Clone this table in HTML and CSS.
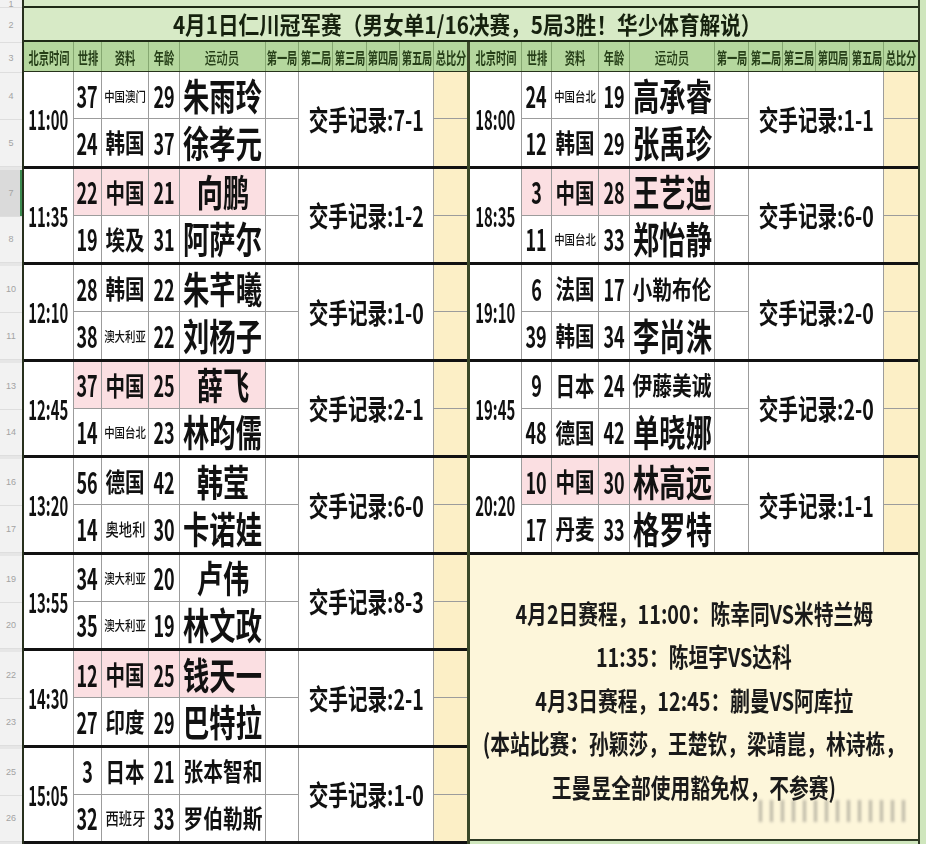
FILE: index.html
```html
<!DOCTYPE html>
<html lang="zh">
<head>
<meta charset="utf-8">
<title>4月1日仁川冠军赛</title>
<link rel="stylesheet" href="styles.css">
</head>
<body>
<div class="gutter">
  <div class="r r1">1</div>
  <div class="r r2">2</div>
  <div class="r r3">3</div>
  <div class="r ra">4</div><div class="r rb">5</div><div class="r rs"></div>
  <div class="r ra sel">7</div><div class="r rb">8</div><div class="r rs"></div>
  <div class="r ra">10</div><div class="r rb">11</div><div class="r rs"></div>
  <div class="r ra">13</div><div class="r rb">14</div><div class="r rs"></div>
  <div class="r ra">16</div><div class="r rb">17</div><div class="r rs"></div>
  <div class="r ra">19</div><div class="r rb">20</div><div class="r rs"></div>
  <div class="r ra">22</div><div class="r rb">23</div><div class="r rs"></div>
  <div class="r ra">25</div><div class="r rb">26</div><div class="r rs"></div>
</div>
<div class="sheet">
  <div class="main">
    <div class="top"></div>
    <div class="title"><span class="t">4月1日仁川冠军赛（男女单1/16决赛，5局3胜！华少体育解说）</span></div>
    <div class="halves">
      <div class="half left">
        <div class="hdr">
          <div class="h"><span class="t">北京时间</span></div><div class="h"><span class="t">世排</span></div><div class="h"><span class="t">资料</span></div><div class="h"><span class="t">年龄</span></div><div class="h light"><span class="t">运动员</span></div><div class="h"><span class="t">第一局</span></div><div class="h"><span class="t">第二局</span></div><div class="h"><span class="t">第三局</span></div><div class="h"><span class="t">第四局</span></div><div class="h"><span class="t">第五局</span></div><div class="h"><span class="t">总比分</span></div>
        </div>

        <div class="match">
          <div class="c time"><span class="t">11:00</span></div>
          <div class="c num r1c"><span class="t">37</span></div><div class="c cty s4 r1c"><span class="t">中国澳门</span></div><div class="c num r1c"><span class="t">29</span></div><div class="c name r1c"><span class="t">朱雨玲</span></div><div class="c g r1c"></div>
          <div class="c num r2c"><span class="t">24</span></div><div class="c cty r2c"><span class="t">韩国</span></div><div class="c num r2c"><span class="t">37</span></div><div class="c name r2c"><span class="t">徐孝元</span></div><div class="c g r2c"></div>
          <div class="c rec"><span class="t">交手记录:7-1</span></div>
          <div class="c tot r1c"></div><div class="c tot r2c"></div>
        </div>

        <div class="match">
          <div class="c time"><span class="t">11:35</span></div>
          <div class="c num r1c pk"><span class="t">22</span></div><div class="c cty r1c pk"><span class="t">中国</span></div><div class="c num r1c pk"><span class="t">21</span></div><div class="c name r1c pk"><span class="t">向鹏</span></div><div class="c g r1c"></div>
          <div class="c num r2c"><span class="t">19</span></div><div class="c cty r2c"><span class="t">埃及</span></div><div class="c num r2c"><span class="t">31</span></div><div class="c name r2c"><span class="t">阿萨尔</span></div><div class="c g r2c"></div>
          <div class="c rec"><span class="t">交手记录:1-2</span></div>
          <div class="c tot r1c"></div><div class="c tot r2c"></div>
        </div>

        <div class="match">
          <div class="c time"><span class="t">12:10</span></div>
          <div class="c num r1c"><span class="t">28</span></div><div class="c cty r1c"><span class="t">韩国</span></div><div class="c num r1c"><span class="t">22</span></div><div class="c name r1c"><span class="t">朱芊曦</span></div><div class="c g r1c"></div>
          <div class="c num r2c"><span class="t">38</span></div><div class="c cty s4 r2c"><span class="t">澳大利亚</span></div><div class="c num r2c"><span class="t">22</span></div><div class="c name r2c"><span class="t">刘杨子</span></div><div class="c g r2c"></div>
          <div class="c rec"><span class="t">交手记录:1-0</span></div>
          <div class="c tot r1c"></div><div class="c tot r2c"></div>
        </div>

        <div class="match">
          <div class="c time"><span class="t">12:45</span></div>
          <div class="c num r1c pk"><span class="t">37</span></div><div class="c cty r1c pk"><span class="t">中国</span></div><div class="c num r1c pk"><span class="t">25</span></div><div class="c name r1c pk"><span class="t">薛飞</span></div><div class="c g r1c"></div>
          <div class="c num r2c"><span class="t">14</span></div><div class="c cty s4 r2c"><span class="t">中国台北</span></div><div class="c num r2c"><span class="t">23</span></div><div class="c name r2c"><span class="t">林昀儒</span></div><div class="c g r2c"></div>
          <div class="c rec"><span class="t">交手记录:2-1</span></div>
          <div class="c tot r1c"></div><div class="c tot r2c"></div>
        </div>

        <div class="match">
          <div class="c time"><span class="t">13:20</span></div>
          <div class="c num r1c"><span class="t">56</span></div><div class="c cty r1c"><span class="t">德国</span></div><div class="c num r1c"><span class="t">42</span></div><div class="c name r1c"><span class="t">韩莹</span></div><div class="c g r1c"></div>
          <div class="c num r2c"><span class="t">14</span></div><div class="c cty s3 r2c"><span class="t">奥地利</span></div><div class="c num r2c"><span class="t">30</span></div><div class="c name r2c"><span class="t">卡诺娃</span></div><div class="c g r2c"></div>
          <div class="c rec"><span class="t">交手记录:6-0</span></div>
          <div class="c tot r1c"></div><div class="c tot r2c"></div>
        </div>

        <div class="match">
          <div class="c time"><span class="t">13:55</span></div>
          <div class="c num r1c"><span class="t">34</span></div><div class="c cty s4 r1c"><span class="t">澳大利亚</span></div><div class="c num r1c"><span class="t">20</span></div><div class="c name r1c"><span class="t">卢伟</span></div><div class="c g r1c"></div>
          <div class="c num r2c"><span class="t">35</span></div><div class="c cty s4 r2c"><span class="t">澳大利亚</span></div><div class="c num r2c"><span class="t">19</span></div><div class="c name r2c"><span class="t">林文政</span></div><div class="c g r2c"></div>
          <div class="c rec"><span class="t">交手记录:8-3</span></div>
          <div class="c tot r1c"></div><div class="c tot r2c"></div>
        </div>

        <div class="match">
          <div class="c time"><span class="t">14:30</span></div>
          <div class="c num r1c pk"><span class="t">12</span></div><div class="c cty r1c pk"><span class="t">中国</span></div><div class="c num r1c pk"><span class="t">25</span></div><div class="c name r1c pk"><span class="t">钱天一</span></div><div class="c g r1c"></div>
          <div class="c num r2c"><span class="t">27</span></div><div class="c cty r2c"><span class="t">印度</span></div><div class="c num r2c"><span class="t">29</span></div><div class="c name r2c"><span class="t">巴特拉</span></div><div class="c g r2c"></div>
          <div class="c rec"><span class="t">交手记录:2-1</span></div>
          <div class="c tot r1c"></div><div class="c tot r2c"></div>
        </div>

        <div class="match">
          <div class="c time"><span class="t">15:05</span></div>
          <div class="c num r1c"><span class="t">3</span></div><div class="c cty r1c"><span class="t">日本</span></div><div class="c num r1c"><span class="t">21</span></div><div class="c name n4 r1c"><span class="t">张本智和</span></div><div class="c g r1c"></div>
          <div class="c num r2c"><span class="t">32</span></div><div class="c cty s3 r2c"><span class="t">西班牙</span></div><div class="c num r2c"><span class="t">33</span></div><div class="c name n4 r2c"><span class="t">罗伯勒斯</span></div><div class="c g r2c"></div>
          <div class="c rec"><span class="t">交手记录:1-0</span></div>
          <div class="c tot r1c"></div><div class="c tot r2c"></div>
        </div>
      </div>

      <div class="half right">
        <div class="hdr">
          <div class="h"><span class="t">北京时间</span></div><div class="h"><span class="t">世排</span></div><div class="h"><span class="t">资料</span></div><div class="h"><span class="t">年龄</span></div><div class="h light"><span class="t">运动员</span></div><div class="h"><span class="t">第一局</span></div><div class="h"><span class="t">第二局</span></div><div class="h"><span class="t">第三局</span></div><div class="h"><span class="t">第四局</span></div><div class="h"><span class="t">第五局</span></div><div class="h"><span class="t">总比分</span></div>
        </div>

        <div class="match">
          <div class="c time"><span class="t">18:00</span></div>
          <div class="c num r1c"><span class="t">24</span></div><div class="c cty s4 r1c"><span class="t">中国台北</span></div><div class="c num r1c"><span class="t">19</span></div><div class="c name r1c"><span class="t">高承睿</span></div><div class="c g r1c"></div>
          <div class="c num r2c"><span class="t">12</span></div><div class="c cty r2c"><span class="t">韩国</span></div><div class="c num r2c"><span class="t">29</span></div><div class="c name r2c"><span class="t">张禹珍</span></div><div class="c g r2c"></div>
          <div class="c rec"><span class="t">交手记录:1-1</span></div>
          <div class="c tot r1c"></div><div class="c tot r2c"></div>
        </div>

        <div class="match">
          <div class="c time"><span class="t">18:35</span></div>
          <div class="c num r1c pk"><span class="t">3</span></div><div class="c cty r1c pk"><span class="t">中国</span></div><div class="c num r1c pk"><span class="t">28</span></div><div class="c name r1c pk"><span class="t">王艺迪</span></div><div class="c g r1c"></div>
          <div class="c num r2c"><span class="t">11</span></div><div class="c cty s4 r2c"><span class="t">中国台北</span></div><div class="c num r2c"><span class="t">33</span></div><div class="c name r2c"><span class="t">郑怡静</span></div><div class="c g r2c"></div>
          <div class="c rec"><span class="t">交手记录:6-0</span></div>
          <div class="c tot r1c"></div><div class="c tot r2c"></div>
        </div>

        <div class="match">
          <div class="c time"><span class="t">19:10</span></div>
          <div class="c num r1c"><span class="t">6</span></div><div class="c cty r1c"><span class="t">法国</span></div><div class="c num r1c"><span class="t">17</span></div><div class="c name n4 r1c"><span class="t">小勒布伦</span></div><div class="c g r1c"></div>
          <div class="c num r2c"><span class="t">39</span></div><div class="c cty r2c"><span class="t">韩国</span></div><div class="c num r2c"><span class="t">34</span></div><div class="c name r2c"><span class="t">李尚洙</span></div><div class="c g r2c"></div>
          <div class="c rec"><span class="t">交手记录:2-0</span></div>
          <div class="c tot r1c"></div><div class="c tot r2c"></div>
        </div>

        <div class="match">
          <div class="c time"><span class="t">19:45</span></div>
          <div class="c num r1c"><span class="t">9</span></div><div class="c cty r1c"><span class="t">日本</span></div><div class="c num r1c"><span class="t">24</span></div><div class="c name n4 r1c"><span class="t">伊藤美诚</span></div><div class="c g r1c"></div>
          <div class="c num r2c"><span class="t">48</span></div><div class="c cty r2c"><span class="t">德国</span></div><div class="c num r2c"><span class="t">42</span></div><div class="c name r2c"><span class="t">单晓娜</span></div><div class="c g r2c"></div>
          <div class="c rec"><span class="t">交手记录:2-0</span></div>
          <div class="c tot r1c"></div><div class="c tot r2c"></div>
        </div>

        <div class="match">
          <div class="c time"><span class="t">20:20</span></div>
          <div class="c num r1c pk"><span class="t">10</span></div><div class="c cty r1c pk"><span class="t">中国</span></div><div class="c num r1c pk"><span class="t">30</span></div><div class="c name r1c pk"><span class="t">林高远</span></div><div class="c g r1c"></div>
          <div class="c num r2c"><span class="t">17</span></div><div class="c cty r2c"><span class="t">丹麦</span></div><div class="c num r2c"><span class="t">33</span></div><div class="c name r2c"><span class="t">格罗特</span></div><div class="c g r2c"></div>
          <div class="c rec"><span class="t">交手记录:1-1</span></div>
          <div class="c tot r1c"></div><div class="c tot r2c"></div>
        </div>

        <div class="note">
          <div class="nl"><span class="t">4月2日赛程，11:00：陈幸同VS米特兰姆</span></div>
          <div class="nl"><span class="t">11:35：陈垣宇VS达科</span></div>
          <div class="nl"><span class="t">4月3日赛程，12:45：蒯曼VS阿库拉</span></div>
          <div class="nl"><span class="t">(本站比赛：孙颖莎，王楚钦，梁靖崑，林诗栋，</span></div>
          <div class="nl"><span class="t">王曼昱全部使用豁免权，不参赛)</span></div>
          <div class="wm"></div>
        </div>
      </div>
    </div>
  </div>
  <div class="edge"></div>
</div>
</body>
</html>
```

FILE: styles.css
```css
* { box-sizing: border-box; margin: 0; padding: 0; }
html, body { width: 926px; height: 844px; overflow: hidden; background: #fff; }
body {
  display: flex;
  font-family: "Noto Sans CJK SC", "Noto Sans", sans-serif;
  color: #111;
}

/* row-number gutter */
.gutter {
  flex: none;
  width: 24px;
  background: #f2f2f2;
  border-right: 2px solid #27301d;
  display: flex;
  flex-direction: column;
}
.gutter .r {
  flex: none;
  display: flex;
  align-items: center;
  justify-content: center;
  font-family: "Liberation Sans", sans-serif;
  font-size: 9px;
  color: #a3a3a3;
  border-bottom: 1px solid #dedede;
}
.gutter .r1 { height: 8px; align-items: flex-start; line-height: 8px; }
.gutter .r2 { height: 35px; }
.gutter .r3 { height: 30px; }
.gutter .ra { height: 47.25px; }
.gutter .rb { height: 46.25px; }
.gutter .rs { height: 3px; border-bottom: none; background: #e6e6e6; }
.gutter .sel { background: #dadada; box-shadow: inset -2px 0 0 #3c8c50; }

.sheet { flex: 1; min-width: 0; display: flex; background: #cfe6bd; }
.main { width: 896px; min-width: 0; flex: none; border-right: 2px solid #2f3a24; display: flex; flex-direction: column; }
.edge { flex: 1; background: #cfe6bd; }

.top { height: 8px; background: #d7eac6; border-bottom: 2px solid #1f2a16; }
.title {
  height: 35px;
  min-width: 0;
  background: #d7eac6;
  border-bottom: 2px solid #1f2a16;
  display: flex;
  align-items: center;
  justify-content: center;
  padding-right: 8px;
}
.t { display: inline-block; flex: none; white-space: nowrap; line-height: 1; transform: scaleX(var(--sx, 1)); }
.title .t { font-size: 24px; font-weight: 700; color: #16210e; --sx: .86; }

.halves { display: flex; flex: 1; min-width: 0; }
.half { display: flex; flex-direction: column; min-width: 0; }
.left { width: 446px; flex: none; border-right: 3px solid #3a4828; }
.right { flex: 1; }

.hdr, .match { display: grid; gap: 1px; }
.left .hdr, .left .match { grid-template-columns: 49px 27px 46px 30px 85px 32px 33px 33px 32px 33px minmax(0, 1fr); }
.right .hdr, .right .match { grid-template-columns: 51px 29px 46px 30px 84px 33px 33px 32px 33px 33px minmax(0, 1fr); }

.hdr { height: 30px; background: #86a871; border-bottom: 1px solid #26321a; }
.h { min-width: 0; background: #b5d79e; display: flex; align-items: center; justify-content: center; }
.h .t { font-size: 16px; font-weight: 700; color: #263f18; --sx: .64; }
.h.light .t { font-weight: 500; --sx: .72; }

.match {
  height: 96.5px;
  grid-template-rows: 1fr 1fr;
  background: #9c9c9c;
  border-bottom: 3px solid #111;
}
.c { min-width: 0; background: #fff; display: flex; align-items: center; justify-content: center; }
.r1c { grid-row: 1; }
.r2c { grid-row: 2; }
.time { grid-row: 1 / 3; grid-column: 1; }
.rec { grid-row: 1 / 3; grid-column: 7 / 11; }
.tot { grid-column: 11; background: #fcefc6; }
.pk { background: #fbdfe2; }

.time .t { font-size: 27px; font-weight: 700; --sx: .55; }
.num .t { font-size: 29px; font-weight: 700; --sx: .62; }
.cty .t { font-size: 26px; font-weight: 700; --sx: .75; }
.cty.s4 .t { font-size: 13px; font-weight: 500; --sx: .8; }
.cty.s3 .t { font-size: 17px; font-weight: 500; --sx: .78; }
.name .t { font-size: 37px; font-weight: 700; --sx: .71; }
.name.n4 .t { font-size: 25px; --sx: .79; }
.rec .t { font-size: 28px; font-weight: 700; --sx: .7; }

.note {
  position: relative;
  flex: 1;
  max-height: 286.5px;
  min-width: 0;
  background: #fdf6da;
  border-bottom: 2px solid #2f3a24;
  display: flex;
  flex-direction: column;
  align-items: center;
  justify-content: center;
  padding-top: 6px;
}
.nl { height: 43.5px; display: flex; align-items: center; justify-content: center; }
.nl .t { font-size: 26px; font-weight: 700; color: #1a1a1a; --sx: .76; }
.wm {
  position: absolute;
  right: 13px;
  bottom: 17px;
  width: 146px;
  height: 22px;
  background: repeating-linear-gradient(90deg, rgba(80,80,80,.55) 0 3px, transparent 3px 11px);
  filter: blur(1.5px);
  opacity: .7;
}
```
